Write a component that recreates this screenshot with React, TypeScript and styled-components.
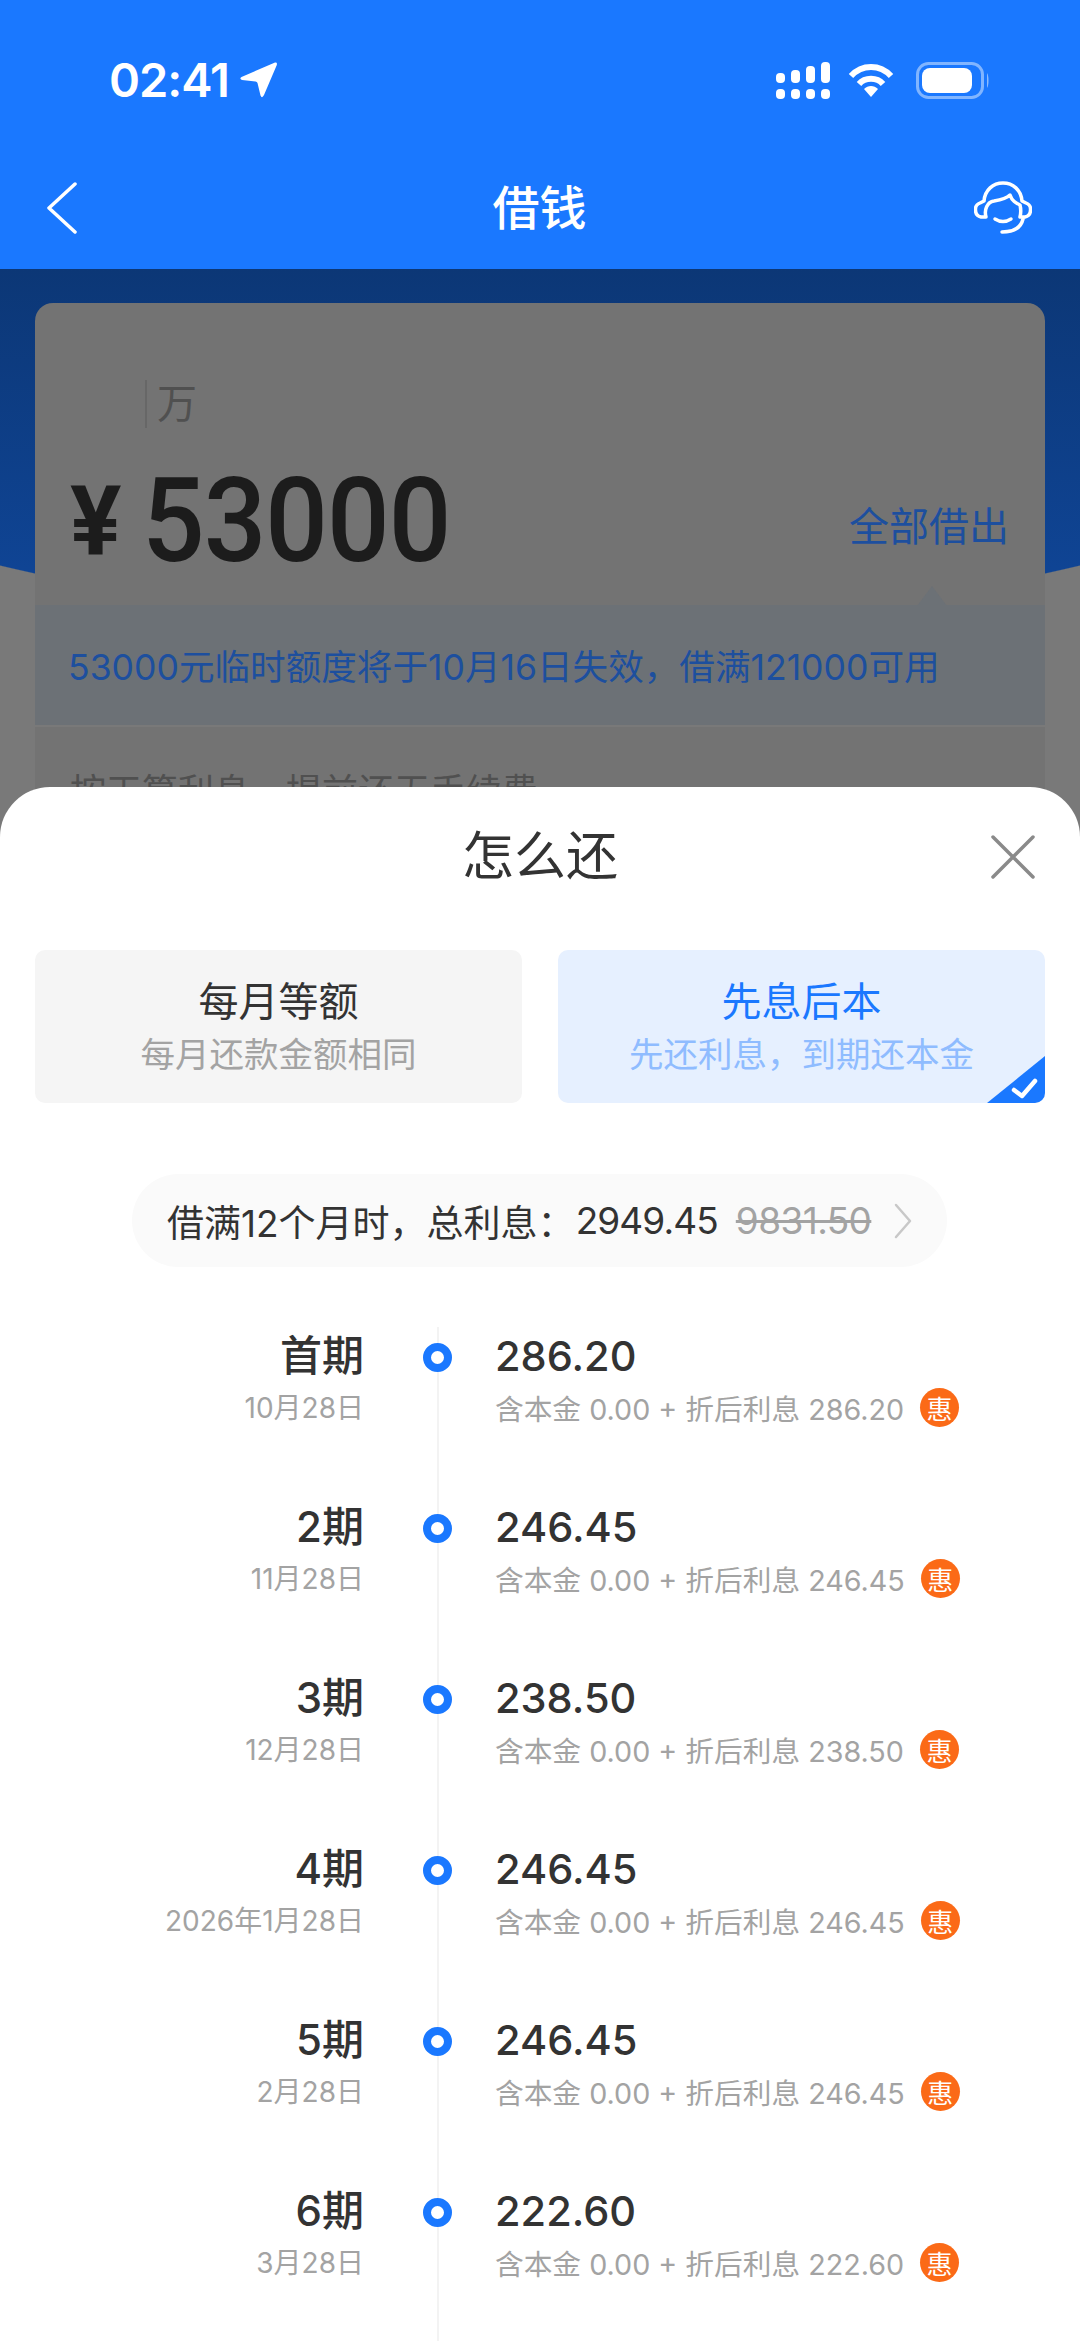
import React from 'react'
import styled, { createGlobalStyle } from 'styled-components'

const GlobalStyle = createGlobalStyle`
  html, body {
    margin: 0;
    padding: 0;
    background: #fff;
  }
  * {
    box-sizing: border-box;
  }
`

const sans = `Inter, 'Noto Sans CJK SC', sans-serif`

const Page = styled.div`
  position: relative;
  width: 1080px;
  height: 2341px;
  overflow: hidden;
  font-family: ${sans};
`

const TopBar = styled.div`
  background-color: #1a78ff;
  color: #fff;
`

const StatusBar = styled.div`
  display: flex;
  align-items: center;
  justify-content: space-between;
  height: 160px;
  padding: 0 90px 0 109px;
`

const StatusLeft = styled.div`
  display: flex;
  align-items: center;
  gap: 11px;
`

const Time = styled.span`
  font-size: 47px;
  font-weight: 600;
  letter-spacing: -1px;
  line-height: 50px;
`

const StatusRight = styled.div`
  display: flex;
  align-items: center;
  gap: 18px;

  & > svg:nth-child(2) {
    margin-right: 4px;
  }
`

const NavBar = styled.div`
  display: grid;
  grid-template-columns: 1fr auto 1fr;
  align-items: center;
  height: 109px;
  padding: 0 48px 14px 47px;

  & > svg:last-child {
    justify-self: end;
  }
`

const NavTitle = styled.span`
  font-size: 47px;
  font-weight: 500;
  line-height: 60px;
`

const Backdrop = styled.div`
  height: 2072px;
  padding: 34px 35px 0;
  background:
    radial-gradient(circle 2350px at 540px -1990px, transparent 99.95%, #797979 100%),
    linear-gradient(#0c3776, #0f4494 300px);
`

const AmountCard = styled.div`
  height: 302px;
  padding: 77px 36px 0 35px;
  border-radius: 18px 18px 0 0;
  background-color: #737373;
`

const UnitRow = styled.div`
  display: flex;
  align-items: center;
  height: 48px;
  margin-left: 75px;
  padding: 0 0 6px 10px;
  border-left: 2px solid #676767;
  color: #505050;
  font-size: 40px;
`

const AmountRow = styled.div`
  display: flex;
  align-items: center;
  justify-content: space-between;
  margin-top: 28px;
  height: 130px;
`

const AmountValue = styled.div`
  display: flex;
  align-items: center;
  color: #1c1c1c;
`

const Currency = styled.span`
  font-family: Roboto, sans-serif;
  font-size: 96px;
  font-weight: 700;
  width: 72px;
`

const AmountDigits = styled.span`
  font-family: Roboto, sans-serif;
  font-size: 116px;
  font-weight: 500;
  letter-spacing: -1px;
  transform: scaleX(0.95);
  transform-origin: left center;
`

const BorrowAll = styled.span`
  margin-top: 6px;
  color: #1d4f9e;
  font-size: 40px;
`

const Notice = styled.div`
  position: relative;
  display: flex;
  align-items: center;
  height: 120px;
  padding: 0 0 2px 33px;
  background-color: #6c7176;
  color: #1d4f9e;
  font-size: 35.6px;
  white-space: nowrap;

  &::before {
    content: '';
    position: absolute;
    top: -19px;
    left: 882px;
    border-style: solid;
    border-width: 0 15px 20px;
    border-color: transparent transparent #6c7176;
  }
`

const TermsCard = styled.div`
  margin-top: 2px;
  height: 200px;
  padding: 40px 0 0 35px;
  background-color: #737373;
  color: #505050;
  font-size: 36px;
  line-height: 50px;
`

const Sheet = styled.div`
  position: absolute;
  top: 787px;
  left: 0;
  right: 0;
  bottom: 0;
  padding-top: 40px;
  border-radius: 50px 50px 0 0;
  background-color: #fff;
`

const SheetHeader = styled.div`
  display: grid;
  grid-template-columns: 1fr auto 1fr;
  align-items: center;
  height: 60px;
  padding: 0 45px;
`

const SheetTitle = styled.span`
  grid-column: 2;
  color: #333;
  font-size: 52px;
  font-weight: 400;
  line-height: 60px;
`

const CloseButton = styled.svg`
  justify-self: end;
  width: 44px;
  height: 44px;
`

const PlanRow = styled.div`
  display: grid;
  grid-template-columns: 1fr 1fr;
  gap: 36px;
  height: 153px;
  margin-top: 63px;
  padding: 0 35px;
`

const PlanCard = styled.div<{ $active?: boolean }>`
  position: relative;
  display: flex;
  flex-direction: column;
  align-items: center;
  padding-top: 27px;
  overflow: hidden;
  border-radius: 10px;
  background-color: ${(p) => (p.$active ? '#e6f0ff' : '#f5f5f5')};
`

const PlanTitle = styled.span<{ $active?: boolean }>`
  color: ${(p) => (p.$active ? '#1a78ff' : '#333')};
  font-size: 40px;
  line-height: 50px;
`

const PlanSub = styled.span<{ $active?: boolean }>`
  margin-top: 3px;
  color: ${(p) => (p.$active ? '#8fbcff' : '#a3a3a3')};
  font-size: 34.5px;
  line-height: 50px;
`

const CornerCheck = styled.svg`
  position: absolute;
  right: 0;
  bottom: 0;
  width: 58px;
  height: 47px;
`

const InterestPill = styled.div`
  display: flex;
  align-items: center;
  width: 815px;
  height: 93px;
  margin: 71px 0 0 132px;
  padding-left: 35px;
  border-radius: 47px;
  background-color: #fafafa;
  color: #333;
  font-size: 37px;
  white-space: nowrap;
`

const InterestValue = styled.span`
  margin-left: 1px;
  letter-spacing: -0.9px;
`

const OldInterest = styled.span`
  margin-left: 18px;
  color: #a3a3a3;
  letter-spacing: -0.6px;
  text-decoration: line-through;
`

const PillChevron = styled.svg`
  width: 20px;
  height: 36px;
  margin-left: 22px;
`

const Timeline = styled.div`
  position: relative;
  margin-top: 63px;

  &::before {
    content: '';
    position: absolute;
    top: -3px;
    bottom: 0;
    left: 437px;
    width: 2px;
    background-color: #f3f3f3;
  }
`

const Row = styled.div`
  position: relative;
  display: grid;
  grid-template-columns: 364px 131px 1fr;
  height: 171px;
`

const PeriodCell = styled.div`
  display: flex;
  flex-direction: column;
  align-items: flex-end;
`

const PeriodLabel = styled.span`
  color: #333;
  font-size: 42px;
  font-weight: 500;
  line-height: 52px;
`

const DateLabel = styled.span`
  color: #a3a3a3;
  font-size: 28px;
  line-height: 52px;
`

const Dot = styled.div`
  width: 29px;
  height: 29px;
  margin: 13px 0 0 59px;
  border: 8px solid #1a78ff;
  border-radius: 50%;
  background-color: #fff;
`

const AmountCell = styled.div`
  display: flex;
  flex-direction: column;
`

const RowAmount = styled.span`
  color: #333;
  font-size: 41.5px;
  font-weight: 500;
  line-height: 52px;
`

const RowDetail = styled.div`
  display: flex;
  align-items: center;
  gap: 16px;
  height: 50px;
  color: #a3a3a3;
  font-size: 28.7px;
  white-space: nowrap;
`

const Badge = styled.span`
  display: flex;
  align-items: center;
  justify-content: center;
  width: 39px;
  height: 39px;
  border-radius: 50%;
  background-color: #fb6a17;
  color: #fff;
  font-size: 26px;
`

const schedule = [
  { period: '首期', date: '10月28日', amount: '286.20' },
  { period: '2期', date: '11月28日', amount: '246.45' },
  { period: '3期', date: '12月28日', amount: '238.50' },
  { period: '4期', date: '2026年1月28日', amount: '246.45' },
  { period: '5期', date: '2月28日', amount: '246.45' },
  { period: '6期', date: '3月28日', amount: '222.60' },
]

const SignalIcon = () => (
  <svg width="54" height="37" viewBox="0 0 54 37" fill="#fff">
    <rect x="0" y="11" width="9" height="10" rx="4" />
    <rect x="15" y="8" width="9" height="13" rx="4" />
    <rect x="30" y="4" width="9" height="17" rx="4" />
    <rect x="45" y="0" width="9" height="21" rx="4" />
    <rect x="0" y="27" width="9" height="10" rx="4" />
    <rect x="15" y="27" width="9" height="10" rx="4" />
    <rect x="30" y="27" width="9" height="10" rx="4" />
    <rect x="45" y="27" width="9" height="10" rx="4" />
  </svg>
)

const WifiIcon = () => (
  <svg width="46" height="35" viewBox="0 0 46 35" fill="none" stroke="#fff" strokeWidth="6">
    <path d="M3 13 C14 1 32 1 43 13" />
    <path d="M11 21 C17 14 29 14 35 21" />
    <path d="M23 34 L16 26 C20 22 26 22 30 26 Z" fill="#fff" stroke="none" />
  </svg>
)

const BatteryIcon = () => (
  <svg width="74" height="37" viewBox="0 0 74 37">
    <rect x="1.5" y="1.5" width="65" height="34" rx="11" fill="none" stroke="#fff" strokeOpacity="0.45" strokeWidth="3" />
    <rect x="6" y="6" width="50" height="25" rx="8" fill="#fff" />
    <path d="M71 11 C73 13 73 24 71 26 Z" fill="#fff" fillOpacity="0.5" />
  </svg>
)

const HeadsetIcon = () => (
  <svg width="58" height="53" viewBox="0 0 58 53" fill="none" stroke="#fff" strokeWidth="3.5" strokeLinecap="round" strokeLinejoin="round">
    <path d="M10 20 L6 22 Q1 24 1.5 29 Q1.5 35 7 36 L12 36 C10 29 13 21 20 20 C26 19 32 18 36 14 C38 20 42 22 46 24 C47 28 47 32 46 36 L51 36 Q56.5 35 56.5 29 Q57 24 52 22 L48 20 C47 9 39 2 29 2 C19 2 11 9 10 20 Z" />
    <path d="M21 38 Q29 43 37 38" />
    <path d="M49 38 C47 47 40 51 28 51" />
  </svg>
)

export default function App() {
  return (
    <Page>
      <GlobalStyle />
      <TopBar>
        <StatusBar>
          <StatusLeft>
            <Time>02:41</Time>
            <svg width="37" height="36" viewBox="0 0 37 36" fill="#fff">
              <path d="M35 0.5 Q37.5 0 36.8 3 L24 33 Q22 37 20.5 33.5 L17.5 21 Q17 19.5 15.5 19.5 L2 18 Q-1 17 1.5 15 Z" />
            </svg>
          </StatusLeft>
          <StatusRight>
            <SignalIcon />
            <WifiIcon />
            <BatteryIcon />
          </StatusRight>
        </StatusBar>
        <NavBar>
          <svg width="30" height="52" viewBox="0 0 30 52" fill="none" stroke="#fff" strokeWidth="3.5" strokeLinecap="round" strokeLinejoin="round">
            <path d="M28 2 L2 26 L28 50" />
          </svg>
          <NavTitle>借钱</NavTitle>
          <HeadsetIcon />
        </NavBar>
      </TopBar>

      <Backdrop>
        <AmountCard>
          <UnitRow>万</UnitRow>
          <AmountRow>
            <AmountValue>
              <Currency>¥</Currency>
              <AmountDigits>53000</AmountDigits>
            </AmountValue>
            <BorrowAll>全部借出</BorrowAll>
          </AmountRow>
        </AmountCard>
        <Notice>53000元临时额度将于10月16日失效，借满121000可用</Notice>
        <TermsCard>按天算利息，提前还无手续费</TermsCard>
      </Backdrop>

      <Sheet>
        <SheetHeader>
          <SheetTitle>怎么还</SheetTitle>
          <CloseButton viewBox="0 0 44 44" fill="none" stroke="#8a8a8a" strokeWidth="3.5" strokeLinecap="round">
            <path d="M2 2 L42 42 M42 2 L2 42" />
          </CloseButton>
        </SheetHeader>

        <PlanRow>
          <PlanCard>
            <PlanTitle>每月等额</PlanTitle>
            <PlanSub>每月还款金额相同</PlanSub>
          </PlanCard>
          <PlanCard $active>
            <PlanTitle $active>先息后本</PlanTitle>
            <PlanSub $active>先还利息，到期还本金</PlanSub>
            <CornerCheck viewBox="0 0 58 47">
              <path d="M0 47 L58 0 L58 47 Z" fill="#1a78ff" />
              <path d="M27 34 L35 40 L48 25" fill="none" stroke="#fff" strokeWidth="4.5" strokeLinecap="round" strokeLinejoin="round" />
            </CornerCheck>
          </PlanCard>
        </PlanRow>

        <InterestPill>
          借满12个月时，总利息：
          <InterestValue>2949.45</InterestValue>
          <OldInterest>9831.50</OldInterest>
          <PillChevron viewBox="0 0 20 36" fill="none" stroke="#c8c8c8" strokeWidth="2.5" strokeLinecap="round" strokeLinejoin="round">
            <path d="M3 2 L17 18 L3 34" />
          </PillChevron>
        </InterestPill>

        <Timeline>
          {schedule.map((item) => (
            <Row key={item.period}>
              <PeriodCell>
                <PeriodLabel>{item.period}</PeriodLabel>
                <DateLabel>{item.date}</DateLabel>
              </PeriodCell>
              <Dot />
              <AmountCell>
                <RowAmount>{item.amount}</RowAmount>
                <RowDetail>
                  含本金 0.00 + 折后利息 {item.amount}
                  <Badge>惠</Badge>
                </RowDetail>
              </AmountCell>
            </Row>
          ))}
        </Timeline>
      </Sheet>
    </Page>
  )
}
